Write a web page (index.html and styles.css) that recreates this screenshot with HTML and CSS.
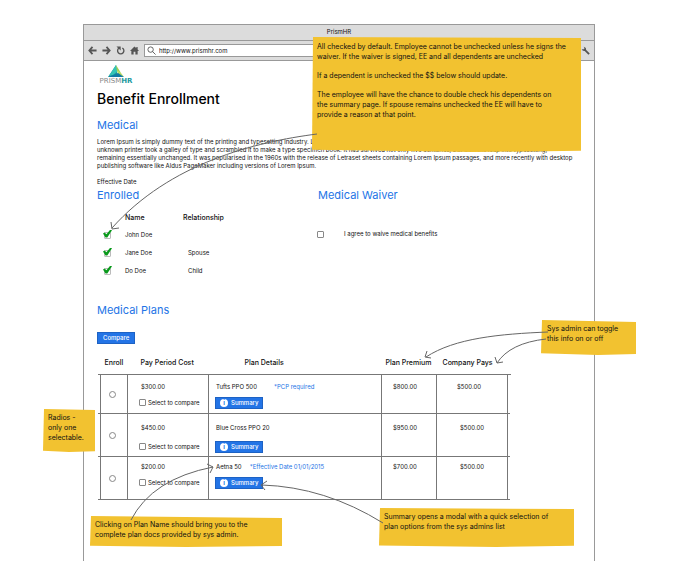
FILE: index.html
```html
<!DOCTYPE html>
<html lang="en">
<head>
  <meta charset="UTF-8">
  <title>PrismHR</title>
  <link rel="stylesheet" href="styles.css">
</head>
<body>

  <div class="browser">
    <div class="titlebar">PrismHR</div>
    <div class="toolbar">
      <button class="tool" aria-label="Back"><svg viewBox="0 0 10 10"><path d="M5 1 1.500 5 5 9M2 5h7.500"/></svg></button>
      <button class="tool" aria-label="Forward"><svg viewBox="0 0 10 10"><path d="M5 1 8.500 5 5 9M8 5H.5"/></svg></button>
      <button class="tool" aria-label="Reload"><svg viewBox="0 0 10 10"><path class="thin" d="M3.500 2.200a3.500 3.500 0 1 0 3.500 0"/><path class="solid" d="M.5.600h4.700v4.400z"/></svg></button>
      <button class="tool" aria-label="Home"><svg viewBox="0 0 10 10"><path class="solid" d="M5 .5 0 5.500h1.500V9.500h2.500V6.500h2v3h2.500V5.500H10L8.500 4V1H7v1.500z"/></svg></button>
      <label class="address">
        <svg viewBox="0 0 10 10"><circle cx="4" cy="4" r="3"/><path d="m6 6 3.500 3.500"/></svg>
        <input type="text" value="http://www.prismhr.com" aria-label="Address">
      </label>
      <button class="tool" aria-label="Settings"><svg viewBox="0 0 10 10"><path d="m4 4 5 5"/><path class="solid" d="M.8 3.200 2.400 4 4 2.600 3 .8a3 3 0 0 1 2.400 4.200A3 3 0 0 1 .8 3.200z"/></svg></button>
    </div>

    <main class="page">
      <div class="logo">
        <svg viewBox="0 0 18 12"><path fill="#1d9aa0" d="M9 0 1 12h10z"/><path fill="#35c4b5" d="M9 0 2 11l4-1 5-4z"/><path fill="#a3cf4e" d="m9 0 5 8-4-2z"/><path fill="#b9dc62" d="m10 5 4 3 3 4-6-3z"/><path fill="#127ba3" d="M1 12h16l-6-4z"/></svg>
        <span>PRISM<b>HR</b></span>
      </div>
      <h1>Benefit Enrollment</h1>

      <h2>Medical</h2>
      <p class="intro">Lorem Ipsum is simply dummy text of the printing and typesetting industry. Lorem Ipsum has been the industry's standard dummy text, and an<br>
        unknown printer took a galley of type and scrambled it to make a type specimen book. It has survived not only five centuries, but also the leap into typesetting,<br>
        remaining essentially unchanged. It was popularised in the 1960s with the release of Letraset sheets containing Lorem Ipsum passages, and more recently with desktop<br>
        publishing software like Aldus PageMaker including versions of Lorem Ipsum.</p>
      <p class="date">Effective Date</p>

      <div class="columns">
        <section>
          <h2>Enrolled</h2>
          <table class="people">
            <thead>
              <tr><th></th><th>Name</th><th>Relationship</th></tr>
            </thead>
            <tbody>
              <tr><td><input type="checkbox" id="john" checked></td><td><label for="john">John Doe</label></td><td></td></tr>
              <tr><td><input type="checkbox" id="jane" checked></td><td><label for="jane">Jane Doe</label></td><td>Spouse</td></tr>
              <tr><td><input type="checkbox" id="do" checked></td><td><label for="do">Do Doe</label></td><td>Child</td></tr>
            </tbody>
          </table>
        </section>
        <section>
          <h2>Medical Waiver</h2>
          <label class="waiver"><input type="checkbox"> I agree to waive medical benefits</label>
        </section>
      </div>

      <h2>Medical Plans</h2>
      <button class="btn">Compare</button>

      <table class="plans">
        <colgroup>
          <col class="c-enroll"><col class="c-cost"><col class="c-details"><col class="c-premium"><col class="c-company">
        </colgroup>
        <thead>
          <tr><th>Enroll</th><th class="cost">Pay Period Cost</th><th class="details">Plan Details</th><th>Plan Premium</th><th>Company Pays</th></tr>
        </thead>
        <tbody>
          <tr class="first">
            <td class="pick"><input type="radio" name="plan" aria-label="Tufts PPO 500"></td>
            <td class="cost"><div class="line">$300.00</div><label><input type="checkbox"> Select to compare</label></td>
            <td class="details"><div class="line"><a href="#">Tufts PPO 500</a><span class="remark">*PCP required</span></div><button class="btn summary"><i>i</i>Summary</button></td>
            <td class="money">$800.00</td>
            <td class="money">$500.00</td>
          </tr>
          <tr class="second">
            <td class="pick"><input type="radio" name="plan" aria-label="Blue Cross PPO 20"></td>
            <td class="cost"><div class="line">$450.00</div><label><input type="checkbox"> Select to compare</label></td>
            <td class="details"><div class="line"><a href="#">Blue Cross PPO 20</a></div><button class="btn summary"><i>i</i>Summary</button></td>
            <td class="money">$950.00</td>
            <td class="money">$500.00</td>
          </tr>
          <tr class="third">
            <td class="pick"><input type="radio" name="plan" aria-label="Aetna 50"></td>
            <td class="cost"><div class="line">$200.00</div><label><input type="checkbox"> Select to compare</label></td>
            <td class="details"><div class="line"><a href="#">Aetna 50</a><span class="remark near">*Effective Date 01/01/2015</span></div><button class="btn summary"><i>i</i>Summary</button></td>
            <td class="money">$700.00</td>
            <td class="money">$500.00</td>
          </tr>
        </tbody>
      </table>
    </main>
  </div>

  <!-- sticky notes -->
  <div class="note note-default">
    <p>All checked by default. Employee cannot be unchecked unless he signs the<br>waiver. If the waiver is signed, EE and all dependents are unchecked</p>
    <p>If a dependent is unchecked the $$ below should update.</p>
    <p>The employee will have the chance to double check his dependents on<br>the summary page. If spouse remains unchecked the EE will have to<br>provide a reason at that point.</p>
  </div>
  <div class="note note-toggle"><p>Sys admin can toggle<br>this info on or off</p></div>
  <div class="note note-radios"><p>Radios -<br>only one<br>selectable.</p></div>
  <div class="note note-docs"><p>Clicking on Plan Name should bring you to the<br>complete plan docs provided by sys admin.</p></div>
  <div class="note note-modal"><p>Summary opens a modal with a quick selection of<br>plan options from the sys admins list</p></div>

  <!-- arrows -->
  <svg class="arrows" width="680" height="561" viewBox="0 0 680 561">
    <path d="M317 134C255 142 170 163 112 228M111 222l1 7 7-1"/>
    <path d="M548 332C500 334 455 338 426 357M427 351l-2 6 6 1"/>
    <path d="M546 339Q510 343 497 363M495 357l2 6 6-1"/>
    <path d="M131 520Q152 479 213 467M207 464l6 3-3 6"/>
    <path d="M383 523Q325 487 262 485M267 481l-6 4 4 5"/>
  </svg>

</body>
</html>
```
FILE: styles.css
```css
* {
  box-sizing: border-box;
}

body {
  margin: 0;
  position: relative;
  background: #fff;
  color: #111;
  font-family: Inter, Lato, sans-serif;
  font-size: 6px;
  line-height: 8px;
}

h1, h2, p {
  margin: 0;
  font-weight: normal;
}

button, input {
  font: inherit;
  color: inherit;
  margin: 0;
  padding: 0;
}

.browser {
  margin: 24px 85px 0 83px;
  min-height: calc(100vh - 24px);
  border: 1px solid #999;
  border-bottom: none;
}

.titlebar {
  height: 16px;
  line-height: 13px;
  text-align: center;
  background: #dcdcdc;
  border-bottom: 1px solid #999;
}

.toolbar {
  display: flex;
  align-items: center;
  gap: 5px;
  height: 20px;
  padding: 0 4px;
  background: #dcdcdc;
  border-bottom: 1px solid #999;
}

.tool {
  width: 9px;
  height: 9px;
  border: none;
  background: none;
}

.tool svg, .address svg {
  display: block;
  width: 9px;
  height: 9px;
  fill: none;
  stroke: #555;
  stroke-width: 2;
}

.tool .thin {
  stroke-width: 1.5;
}

.tool .solid {
  fill: #555;
  stroke: none;
}

.address {
  flex: 1;
  display: flex;
  align-items: center;
  gap: 3px;
  height: 13px;
  padding: 0 2px;
  margin-right: 4px;
  background: #fff;
  border: 1px solid #999;
}

.address svg {
  stroke-width: 1;
}

.address input {
  flex: 1;
  border: none;
  outline: none;
}

.page {
  padding: 4px 13px 0;
}

.logo {
  width: 38px;
  text-align: center;
  font-family: "DejaVu Sans", sans-serif;
  font-size: 7px;
  color: #888;
}

.logo svg {
  display: block;
  width: 18px;
  height: 12px;
  margin: 0 auto;
}

.logo span {
  display: block;
}

.logo b {
  color: #1d9aa0;
}

h1 {
  margin-top: 4px;
  font-size: 14px;
  font-weight: 500;
  line-height: 20px;
  color: #000;
}

h2 {
  font-size: 11px;
  line-height: 14px;
  color: #2374e6;
}

h1 + h2 {
  margin-top: 9px;
}

.intro {
  margin-top: 6px;
  white-space: nowrap;
}

.date {
  margin-top: 8px;
}

.columns {
  display: grid;
  grid-template-columns: 221px 1fr;
  margin-top: 2px;
  margin-bottom: 23px;
}

.people {
  border-collapse: collapse;
  margin-top: 8px;
}

.people th, .people td {
  padding: 0;
  height: 18px;
  text-align: left;
}

.people th {
  height: 16px;
  font-size: 7px;
  font-weight: 500;
}

.people th:nth-child(1) {
  width: 28px;
}

.people th:nth-child(2) {
  width: 58px;
}

.people td:first-child {
  padding-left: 7px;
}

.people td:last-child {
  padding-left: 5px;
}

input[type="checkbox"], input[type="radio"] {
  appearance: none;
  display: block;
  position: relative;
  width: 7px;
  height: 7px;
  border: 1px solid #888;
  border-radius: 1px;
  background: #fff;
}

input[type="radio"] {
  border-radius: 50%;
}

input[type="checkbox"]:checked {
  border-color: #bbb;
}

input[type="checkbox"]:checked::before {
  content: "";
  position: absolute;
  left: -2px;
  top: -3px;
  width: 9px;
  height: 8px;
  background: #0a9a1c;
  clip-path: polygon(0 50%, 18% 38%, 38% 58%, 82% 0, 100% 8%, 48% 100%, 28% 100%);
}

.waiver {
  display: flex;
  align-items: center;
  gap: 20px;
  margin-left: -1px;
  margin-top: 28px;
}

.btn {
  height: 12px;
  padding: 0 5px;
  border: 1px solid #1d62c4;
  background: #2374e6;
  color: #fff;
  font-weight: 500;
  line-height: 10px;
}

h2 + .btn {
  display: block;
  margin-top: 15px;
}

.plans {
  width: 407px;
  margin: 8px 0 0 3px;
  border-collapse: collapse;
  table-layout: fixed;
}

.c-enroll { width: 27px; }
.c-cost { width: 81px; }
.c-details { width: 173px; }
.c-premium { width: 55px; }
.c-company { width: 71px; }

.plans th {
  position: relative;
  height: 22px;
  padding: 0;
  font-size: 7px;
  font-weight: 500;
  text-align: left;
  padding-left: 4px;
  white-space: nowrap;
}

.plans th:last-child {
  padding-left: 6px;
}

.plans td {
  position: relative;
  padding: 8px 0 0;
  border: 1px solid #777;
  vertical-align: top;
}

/* rules run a little past the outer columns */
.plans tr > :first-child::before, .plans tr > :last-child::before {
  content: "";
  position: absolute;
  bottom: -1px;
  width: 3px;
  height: 1px;
  background: #777;
}

.plans tr > :first-child::before {
  left: -3px;
}

.plans tr > :last-child::before {
  right: -3px;
}

.plans .cost {
  padding-left: 13px;
}

.plans th.details {
  padding-left: 36px;
}

.plans td.details {
  padding-left: 7px;
}

.plans td.money {
  padding-left: 11px;
}

.plans td.money:last-child {
  padding-left: 20px;
}

.plans .second td.money:last-child, .plans .third td.money:last-child {
  padding-left: 23px;
}

.plans .pick {
  vertical-align: middle;
  padding: 2px 0 0 8px;
}

.first td { height: 39px; }
.second td { height: 43px; }
.third td { height: 43px; }

.plans .second td:not(.pick) {
  padding-top: 10px;
}

.plans .third td:not(.pick) {
  padding-top: 6px;
}

.line {
  display: flex;
  gap: 17px;
  height: 8px;
  margin-bottom: 6px;
}

.second .line {
  margin-bottom: 9px;
}

.plans label {
  display: flex;
  align-items: center;
  gap: 2px;
  height: 12px;
  margin-left: -2px;
}

.plans a {
  color: inherit;
  text-decoration: none;
}

.remark {
  color: #2374e6;
}

.line:has(.near) {
  gap: 8px;
}

.summary {
  display: flex;
  align-items: center;
  gap: 3px;
  margin-left: -1px;
  padding: 0 4px;
}

.summary i {
  width: 8px;
  height: 8px;
  border-radius: 50%;
  background: #fff;
  color: #2374e6;
  font-style: normal;
  font-weight: bold;
  line-height: 8px;
}

/* notes and arrows lie over the page */
.note {
  position: absolute;
  padding: 4px;
  background: #f2c230;
  font-size: 7px;
  font-weight: 500;
  line-height: 10px;
  white-space: nowrap;
}

.note p + p {
  margin-top: 9px;
}

.note-default {
  left: 312px;
  top: 37px;
  width: 269px;
  height: 115px;
  padding: 5px;
  clip-path: polygon(1px 0, 100% 1px, 100% 99%, 60% 100%, 0 98%);
}

.note-toggle {
  left: 541px;
  top: 320px;
  width: 95px;
  height: 35px;
  padding-left: 6px;
  clip-path: polygon(1px 0, 100% 2px, 100% 97%, 60% 100%, 0 95%);
}

.note-radios {
  left: 43px;
  top: 409px;
  width: 52px;
  height: 43px;
  padding-left: 5px;
  clip-path: polygon(1px 0, 100% 1px, 100% 98%, 50% 100%, 0 97%);
}

.note-docs {
  left: 90px;
  top: 516px;
  width: 192px;
  height: 31px;
  padding-left: 5px;
  clip-path: polygon(1px 0, 100% 2px, 100% 97%, 50% 100%, 0 96%);
}

.note-modal {
  left: 379px;
  top: 508px;
  width: 195px;
  height: 39px;
  padding-left: 5px;
  clip-path: polygon(1px 0, 100% 1px, 100% 97%, 60% 100%, 0 96%);
}

.arrows {
  position: absolute;
  left: 0;
  top: 0;
  fill: none;
  stroke: #666;
  stroke-width: 1;
  pointer-events: none;
}
```
